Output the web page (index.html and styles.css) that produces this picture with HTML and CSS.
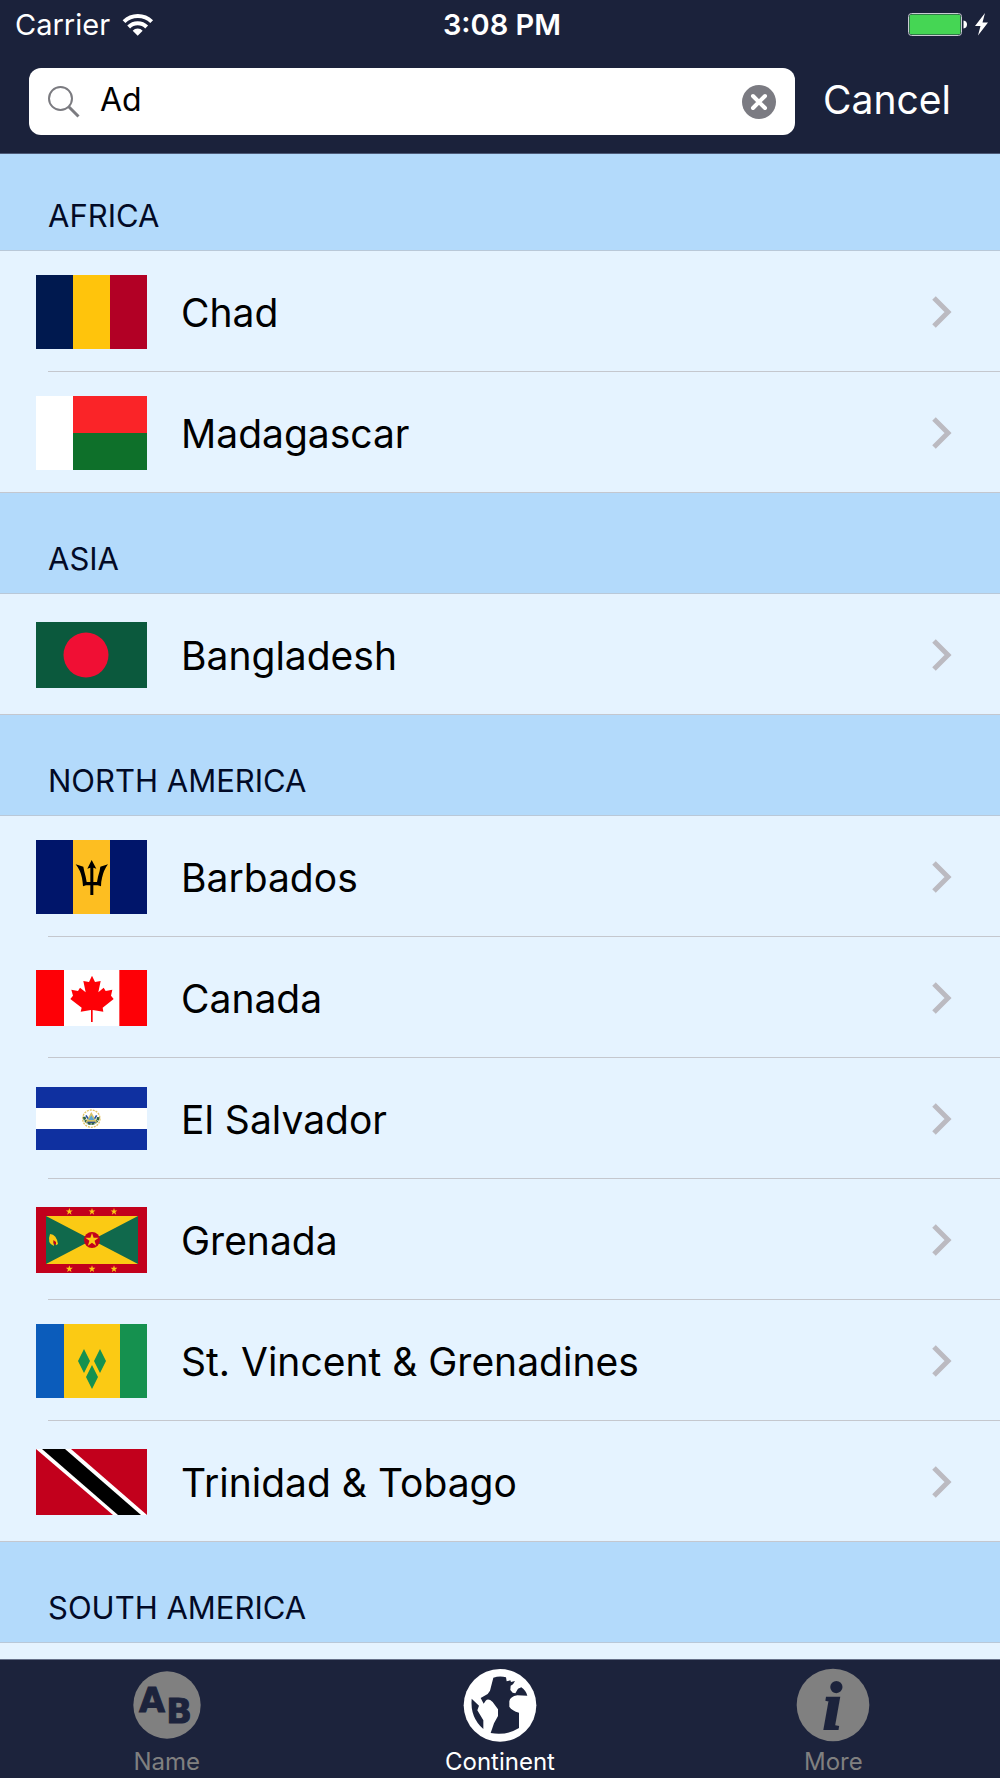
FILE: index.html
```html
<!DOCTYPE html>
<html lang="en">
<head>
  <meta charset="UTF-8">
  <meta name="viewport" content="width=device-width, initial-scale=1">
  <title>Continent</title>
  <link rel="stylesheet" href="styles.css">
</head>
<body>
  <svg class="sprite" aria-hidden="true">
    <symbol id="chevron" viewBox="0 0 20 32">
      <path d="M2 2 L16 16 L2 30" fill="none" stroke="currentColor" stroke-width="5"/>
    </symbol>
    <symbol id="star" viewBox="-10 -10 20 20">
      <path d="M0-10 L2.3-3.1 9.5-3.1 3.7 1.2 5.9 8.1 0 3.9-5.9 8.1-3.7 1.2-9.5-3.1-2.3-3.1Z" fill="#fbca14"/>
    </symbol>
  </svg>

  <header class="header">
    <div class="status">
      <div class="status-left">
        <span>Carrier</span>
        <svg class="wifi" viewBox="360 36 96 72" aria-hidden="true">
          <g fill="none" stroke="#fff" stroke-width="12">
            <path d="M366 62 A60 60 0 0 1 449 62"/>
            <path d="M380 78 A38 38 0 0 1 434 78"/>
          </g>
          <path d="M407 104 L392 89 A21 21 0 0 1 422 89Z" fill="#fff"/>
        </svg>
      </div>
      <span class="time">3:08 PM</span>
      <div class="status-right">
        <svg class="battery" viewBox="0 0 82 26" aria-hidden="true">
          <rect x="1.5" y="1.5" width="53" height="22" rx="3" fill="none" stroke="#c9cbd2"/>
          <rect x="2.5" y="2.5" width="51" height="20" rx="2" fill="#45d654"/>
          <path d="M56.500 8.500 Q60 9 60 12.500 Q60 16 56.500 16.500Z" fill="#fff"/>
          <path d="M78 1 L68 14 L73.500 14 L71 23.500 L81 10.500 L75.500 10.500Z" fill="#fff"/>
        </svg>
      </div>
    </div>
    <form class="search">
      <div class="search-box">
        <svg class="icon-search" viewBox="0 0 32 32" aria-hidden="true">
          <g fill="none" stroke="#7b7b80">
            <circle cx="12.500" cy="12.500" r="11.500" stroke-width="2"/>
            <path d="M20.500 20.500 L30.500 30.500" stroke-width="3"/>
          </g>
        </svg>
        <input type="text" id="q" value="Ad" aria-label="Search">
        <button type="button" class="clear" aria-label="Clear">
          <svg viewBox="0 0 34 34">
            <circle cx="17" cy="17" r="17" fill="#7b7b82"/>
            <path d="M11 11 L23 23 M23 11 L11 23" stroke="#fff" stroke-width="4" stroke-linecap="round"/>
          </svg>
        </button>
      </div>
      <button type="button" class="cancel">Cancel</button>
    </form>
  </header>

  <main class="list">
    <h2>Africa</h2>
    <ul>
      <li><a href="#">
        <svg class="flag" viewBox="0 0 111 74">
          <path fill="#00194f" d="M0 0h37v74H0z"/>
          <path fill="#ffc40c" d="M37 0h37v74H37z"/>
          <path fill="#b20025" d="M74 0h37v74H74z"/>
        </svg>
        <span>Chad</span>
        <svg class="chevron"><use href="#chevron"/></svg>
      </a></li>
      <li><a href="#">
        <svg class="flag" viewBox="0 0 111 74">
          <path fill="#fff" d="M0 0h37v74H0z"/>
          <path fill="#fa2428" d="M37 0h74v37H37z"/>
          <path fill="#0e702a" d="M37 37h74v37H37z"/>
        </svg>
        <span>Madagascar</span>
        <svg class="chevron"><use href="#chevron"/></svg>
      </a></li>
    </ul>

    <h2>Asia</h2>
    <ul>
      <li><a href="#">
        <svg class="flag" viewBox="0 0 111 66">
          <path fill="#0b593d" d="M0 0h111v66H0z"/>
          <circle cx="50" cy="33" r="22.500" fill="#f00f34"/>
        </svg>
        <span>Bangladesh</span>
        <svg class="chevron"><use href="#chevron"/></svg>
      </a></li>
    </ul>

    <h2>North America</h2>
    <ul>
      <li><a href="#">
        <svg class="flag" viewBox="108 59 333 222">
          <path fill="#00156a" d="M108 59h333v222H108z"/>
          <path fill="#fdbe21" d="M219 59h111v222H219z"/>
          <path d="M275 119 L289 145 L280 142 V185 H291 L294 169 Q300 151 301 139 L324 132 Q311 149 306 173 Q303 184 303 198 L293 195 H280 V224 H271 V195 H258 L249 198 Q248 184 246 173 Q241 149 227 132 L250 139 Q252 151 257 169 L260 185 H271 V142 L262 145Z"/>
        </svg>
        <span>Barbados</span>
        <svg class="chevron"><use href="#chevron"/></svg>
      </a></li>
      <li><a href="#">
        <svg class="flag" viewBox="108 450 333 168">
          <path fill="#fff" d="M108 450h333v168H108z"/>
          <path fill="#fe0006" d="M108 450h84v168h-84zM358 450h83v168h-83z"/>
          <path fill="#fe0006" d="M276 467 L285 486 L302 483 L295 517 L311 503 L317 513 L337 509 L333 527 L341 537 L308 563 L310 575 L278 570 V606 H273 V570 L242 575 L245 563 L211 537 L219 527 L214 509 L234 513 L240 503 L257 517 L250 483 L267 486Z"/>
        </svg>
        <span>Canada</span>
        <svg class="chevron"><use href="#chevron"/></svg>
      </a></li>
      <li><a href="#">
        <svg class="flag" viewBox="108 81 333 189">
          <path fill="#0f30a0" d="M108 81h333v189H108z"/>
          <path fill="#fff" d="M108 144h333v63H108z"/>
          <circle cx="274" cy="176" r="26" fill="none" stroke="#e3c467" stroke-width="4" stroke-dasharray="6 3"/>
          <path d="M253 170 A21 21 0 1 0 295 170" fill="none" stroke="#30623c" stroke-width="8" stroke-dasharray="9 2"/>
          <path d="M274 156 L292 188 H256Z" fill="#d8c36a"/>
          <path d="M274 166 L283 180 H265Z" fill="#59a6cf"/>
          <path d="M258 166 L264 176 M290 166 L284 176" stroke="#2451a5" stroke-width="5"/>
          <path d="M262 187 H286" stroke="#2b4f86" stroke-width="4"/>
        </svg>
        <span>El Salvador</span>
        <svg class="chevron"><use href="#chevron"/></svg>
      </a></li>
      <li><a href="#">
        <svg class="flag" viewBox="108 438 333 198">
          <path fill="#c2001c" d="M108 438h333v198H108z"/>
          <path fill="#fbca14" d="M138 465h276v144H138z"/>
          <path fill="#10694c" d="M138 465 L276 537 L138 609zM414 465 L276 537 L414 609z"/>
          <circle cx="276" cy="537" r="24" fill="#c2001c"/>
          <use href="#star" x="255" y="516" width="42" height="42"/>
          <use href="#star" x="197" y="441" width="22" height="22"/>
          <use href="#star" x="265" y="441" width="22" height="22"/>
          <use href="#star" x="331" y="441" width="22" height="22"/>
          <use href="#star" x="197" y="613" width="22" height="22"/>
          <use href="#star" x="265" y="613" width="22" height="22"/>
          <use href="#star" x="331" y="613" width="22" height="22"/>
          <path d="M150 519 Q170 521 174 549 L168 553 L160 540 L162 555 Q140 548 150 519Z" fill="#fbca14"/>
          <path d="M160 537 L168 543 L168 552 L161 548Z" fill="#c2001c"/>
        </svg>
        <span>Grenada</span>
        <svg class="chevron"><use href="#chevron"/></svg>
      </a></li>
      <li><a href="#">
        <svg class="flag" viewBox="0 0 111 74">
          <path fill="#0b5cbb" d="M0 0h28v74H0z"/>
          <path fill="#fbca14" d="M28 0h56v74H28z"/>
          <path fill="#15914f" d="M84 0h27v74H84z"/>
          <path fill="#15914f" d="M48 25l6 12-6 12-6-12zM64 25l6 12-6 12-6-12zM56 41l6 12-6 12-6-12z"/>
        </svg>
        <span>St. Vincent &amp; Grenadines</span>
        <svg class="chevron"><use href="#chevron"/></svg>
      </a></li>
      <li><a href="#">
        <svg class="flag" viewBox="0 0 111 66">
          <path fill="#c2001c" d="M0 0h111v66H0z"/>
          <path fill="#fff" d="M0 0h35l76 66H77z"/>
          <path d="M6 0h23l76 66H82z"/>
        </svg>
        <span>Trinidad &amp; Tobago</span>
        <svg class="chevron"><use href="#chevron"/></svg>
      </a></li>
    </ul>

    <h2>South America</h2>
  </main>

  <nav class="tabs">
    <a href="#" class="tab">
      <svg viewBox="386 265 222 222" aria-hidden="true">
        <circle cx="497" cy="376" r="101" fill="currentColor"/>
        <g class="ab">
          <text x="413" y="396">A</text>
          <text x="495" y="431">B</text>
        </g>
      </svg>
      <span>Name</span>
    </a>
    <a href="#" class="tab active">
      <svg viewBox="189 84 222 222" aria-hidden="true">
        <circle cx="300" cy="196" r="109" fill="currentColor"/>
        <g fill="#1c233c">
          <path d="M280 113 Q300 106 318 112 L320 124 L331 121 L333 126 L345 123 L339 133 L332 137 L331 150 L338 158 L346 160 L354 146 L364 142 Q378 152 382 167 L352 166 Q330 170 328 184 V200 Q336 212 357 218 V264 Q318 288 272 279 L282 250 L294 228 V208 L278 186 Q265 174 257 182 L251 191 L242 174 L263 162 L270 152Z"/>
          <path d="M215 176 L237 197 L232 211 L250 241 V267 Q210 232 215 176Z"/>
        </g>
      </svg>
      <span>Continent</span>
    </a>
    <a href="#" class="tab">
      <svg viewBox="289 205 222 222" aria-hidden="true">
        <circle cx="400" cy="316" r="109" fill="currentColor"/>
        <text class="info" x="369" y="389">i</text>
      </svg>
      <span>More</span>
    </a>
  </nav>
</body>
</html>
```
FILE: styles.css
```css
* { box-sizing: border-box; }
body { margin: 0; height: 100vh; display: flex; flex-direction: column; font-family: Inter, "Liberation Sans", sans-serif; background: #e5f3ff; color: #000; }
svg { display: block; flex: none; }
a { color: inherit; text-decoration: none; }
button { padding: 0; border: none; background: none; font-family: inherit; cursor: pointer; }
.sprite { display: none; }

.header { flex: none; padding-bottom: 18px; background: #1b223b; color: #fff; border-bottom: 1px solid #4d5a77; }
.status { display: flex; align-items: center; height: 50px; padding: 0 11px 0 15px; font-size: 29px; line-height: 34px; }
.status-left, .status-right { flex: 1; display: flex; align-items: center; gap: 12px; }
.status-right { justify-content: flex-end; }
.time { font-weight: 600; }
.wifi { width: 32px; height: 24px; }
.battery { width: 82px; height: 26px; }

.search { display: flex; align-items: center; gap: 28px; margin-top: 18px; padding: 0 49px 0 29px; }
.search-box { flex: 1; display: flex; align-items: center; height: 67px; padding: 0 19px; background: #fff; border-radius: 12px; }
.icon-search { width: 32px; height: 32px; }
.search-box input { flex: 1; min-width: 0; margin: 0 0 0 20px; padding: 0 0 4px; border: none; outline: none; font: 32px/40px Inter, "Liberation Sans", sans-serif; color: #000; }
.clear svg { width: 34px; height: 34px; }
.cancel { padding-bottom: 4px; color: #fff; font-size: 39px; line-height: 48px; }

.list { flex: 1; min-height: 0; overflow: hidden; }
.list h2 { display: flex; align-items: flex-end; height: 101px; margin: 0; padding: 0 48px 16px; background: #b3dafb; border-bottom: 1px solid #b9c8d8; color: #020a26; font-size: 31px; line-height: 36px; font-weight: 400; text-transform: uppercase; }
.list h2:first-child { height: 97px; }
.list ul { list-style: none; margin: 0; padding: 0; }
.list li { background: linear-gradient(#c4c7ce, #c4c7ce) 48px 100% / 100% 1px no-repeat; }
.list li:last-child { background-position: 0 100%; }
.list a { display: flex; align-items: center; height: 121px; padding: 0 48px 0 36px; font-size: 39px; line-height: 48px; }
.list span { flex: 1; margin-left: 34px; padding-top: 2px; }
.flag { width: 111px; }
.chevron { width: 20px; height: 32px; color: #bbbac1; }

.tabs { flex: none; display: flex; height: 119px; padding-top: 8px; background: #1c233c; border-top: 1px solid #67718a; }
.tab { flex: 1; display: flex; flex-direction: column; align-items: center; gap: 4px; color: #808080; font-size: 24px; line-height: 32px; }
.tab svg { width: 74px; height: 74px; overflow: visible; }
.tab.active { color: #fff; }
.ab { font: bold 101px "DejaVu Sans", sans-serif; fill: #1c233c; stroke: #1c233c; stroke-width: 3px; }
.info { font: italic bold 206px "Liberation Serif", serif; fill: #1c233c; stroke: #1c233c; stroke-width: 6px; }
```
